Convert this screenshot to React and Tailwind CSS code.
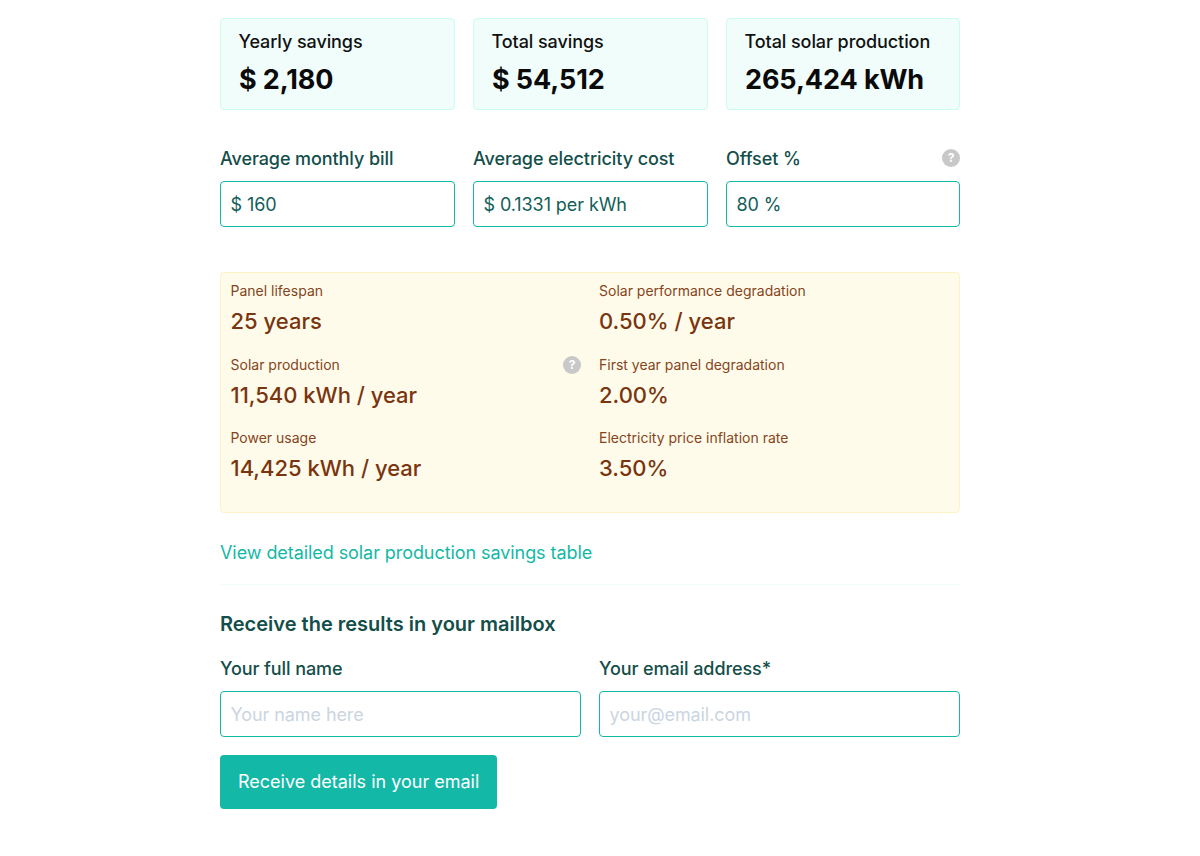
const Help = ({ className = "" }) => (
  <span className={`flex h-[18px] w-[18px] shrink-0 items-center justify-center rounded-full bg-[#c8c8c8] text-[12px] font-bold leading-none text-white ${className}`}>?</span>
);

const Stat = ({ label, value }) => (
  <div className="h-[92px] rounded border border-[#ccfbf1] bg-[#f0fdfa] px-[18px] pt-[12px] text-[#0a0a0a]">
    <div className="-ml-[0.5px] text-[18px] font-[450] leading-[22px] tracking-[-0.08px] text-[#111]">{label}</div>
    <div className="mt-[10px] text-[27px] font-bold leading-[34px] tracking-[-0.1px]">{value}</div>
  </div>
);

const Field = ({ label, value, help, placeholder }) => (
  <div className="min-w-0">
    <div className="flex h-[22px] items-center justify-between">
      <label className="text-[18px] font-[450] leading-[22px] tracking-[-0.08px] text-[#134e4a]">{label}</label>
      {help && <Help className="-mt-[2px]" />}
    </div>
    <input
      readOnly
      value={value}
      placeholder={placeholder}
      className="mt-[11px] h-[46px] w-full rounded border border-[#14b8a6] bg-white px-[9.5px] text-[18px] tracking-[-0.08px] text-[#115e59] outline-none placeholder:text-[#cbd5e1]"
    />
  </div>
);

const Info = ({ label, value, help }) => (
  <div className="h-[73.5px]">
    <div className="flex h-[18px] items-center justify-between">
      <span className="text-[14px] font-normal leading-[18px] text-[#85451c]">{label}</span>
      {help && <Help />}
    </div>
    <div className="mt-[6px] text-[22px] font-medium leading-[30px] text-[#78350f]">{value}</div>
  </div>
);

export default function App() {
  return (
    <div className="min-h-[856px] bg-white pr-[20px] font-['Inter',sans-serif]">
      <div className="mx-auto w-[740px] pt-[18px]">
        <div className="grid grid-cols-[235px_235px_234px] gap-[18px]">
          <Stat label="Yearly savings" value="$ 2,180" />
          <Stat label="Total savings" value="$ 54,512" />
          <Stat label="Total solar production" value="265,424 kWh" />
        </div>

        <div className="mt-[38px] grid grid-cols-[235px_235px_234px] gap-[18px]">
          <Field label="Average monthly bill" value="$ 160" />
          <Field label="Average electricity cost" value="$ 0.1331 per kWh" />
          <Field label="Offset %" value="80 %" help />
        </div>

        <div className="mt-[45px] grid h-[241px] grid-cols-2 gap-x-[18px] rounded border border-[#fef3c7] bg-[#fffbeb] px-[9.5px] pt-[9px]">
          <div>
            <Info label="Panel lifespan" value="25 years" />
            <Info label="Solar production" value="11,540 kWh / year" help />
            <Info label="Power usage" value="14,425 kWh / year" />
          </div>
          <div>
            <Info label="Solar performance degradation" value="0.50% / year" />
            <Info label="First year panel degradation" value="2.00%" />
            <Info label="Electricity price inflation rate" value="3.50%" />
          </div>
        </div>

        <a className="mt-[28px] block text-[18px] font-normal leading-[24px] tracking-[-0.07px] text-[#14b8a6]">View detailed solar production savings table</a>

        <div className="mt-[19px] border-t border-[#f0fdfa]" />

        <h2 className="mt-[26px] text-[20px] font-semibold leading-[26px] text-[#134e4a]">Receive the results in your mailbox</h2>

        <div className="mt-[21px] grid grid-cols-2 gap-[18px]">
          <Field label="Your full name" value="" placeholder="Your name here" />
          <Field label="Your email address*" value="" placeholder="your@email.com" />
        </div>

        <button className="mt-[18px] h-[54px] rounded bg-[#14b8a6] px-[18px] pb-[1px] text-[18px] font-normal text-white">Receive details in your email</button>
      </div>
    </div>
  );
}
